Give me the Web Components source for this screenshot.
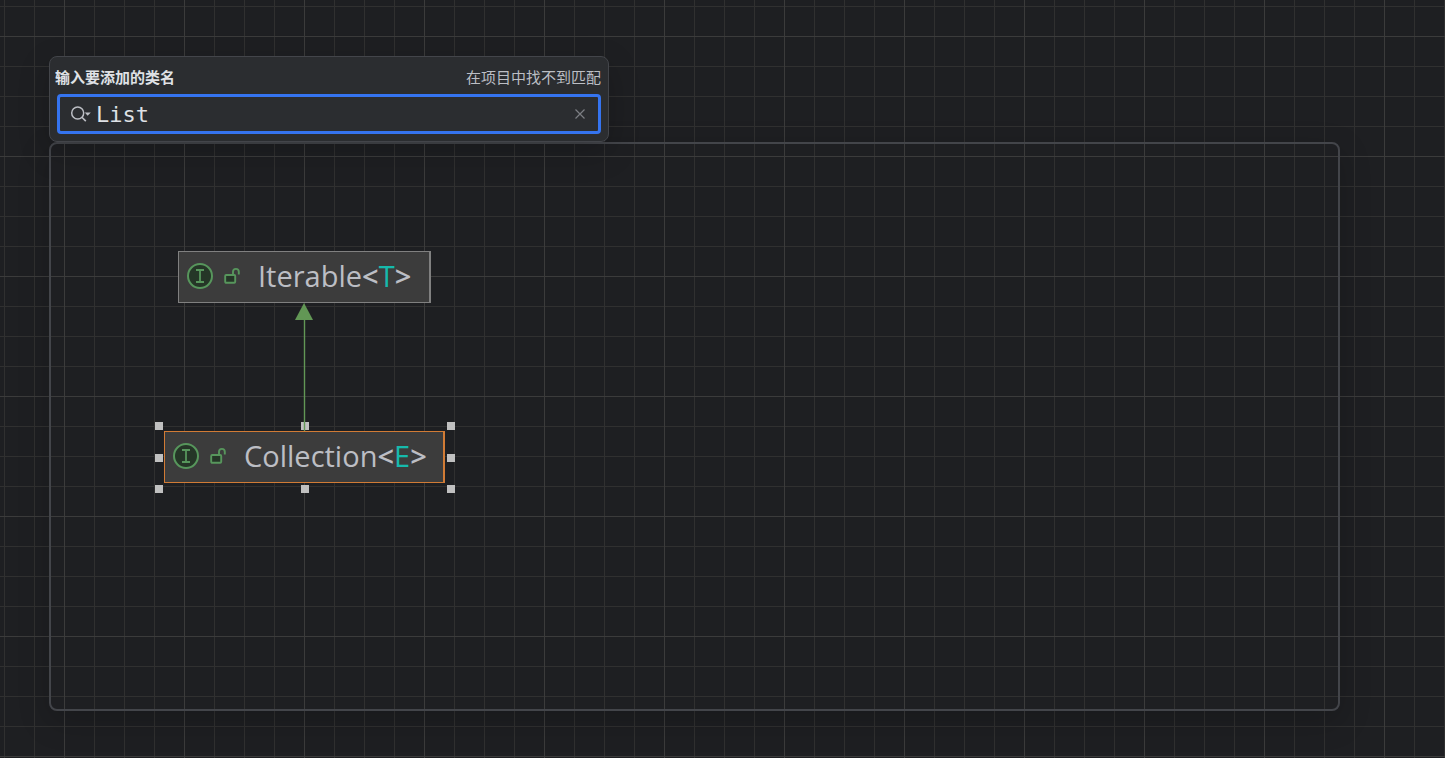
<!DOCTYPE html>
<html lang="zh-CN">
<head>
<meta charset="UTF-8">
<meta name="viewport" content="width=device-width, initial-scale=1.0">
<title>Diagram</title>
<style>
    :root {
        --color-canvas: #1e1f22;
        --color-grid: #303030;
        --color-grid-major: #3b3b3b;
        --color-panel: #2b2d30;
        --color-border: #43454a;
        --color-focus: #3574f0;
        --color-text: #dfe1e5;
        --color-label: #bcbec4;
        --color-node: #3c3c3c;
        --color-green: #57965c;
        --color-param: #16baac;
        --color-selected: #d17b35;
    }

    body {
        margin: 0;
        background-color: var(--color-canvas);
        color: var(--color-text);
        font-family: "Open Sans", "Noto Sans CJK SC", sans-serif;
    }
</style>
</head>
<body>
    <diagram-canvas>
        <class-search slot="search" value="List">
            <span slot="title">输入要添加的类名</span>
            <span slot="status">在项目中找不到匹配</span>
        </class-search>
        <class-node x="127" y="107" width="253">Iterable<b slot="param">T</b></class-node>
        <class-node x="113" y="287" width="281" selected>Collection<b slot="param">E</b></class-node>
        <extends-edge x="244" y="159" length="128"></extends-edge>
    </diagram-canvas>

<script>
class DiagramCanvas extends HTMLElement {

    constructor() {
        super();
        this.attachShadow({ mode: "open" });
    }

    connectedCallback() {
        this.shadowRoot.innerHTML = `
            <style>
                :host {
                    box-sizing: border-box;
                    display: flex;
                    flex-direction: column;
                    min-height: 100vh;
                    padding: 56px 105px 47px 49px;
                    overflow: hidden;
                    background-image:
                        linear-gradient(var(--color-grid-major) 1px, transparent 1px),
                        linear-gradient(90deg, var(--color-grid-major) 1px, transparent 1px),
                        linear-gradient(var(--color-grid) 1px, transparent 1px),
                        linear-gradient(90deg, var(--color-grid) 1px, transparent 1px);
                    background-size: 120px 120px, 120px 120px, 30px 30px, 30px 30px;
                    background-position: 0 36px, 64px 0, 0 6px, 4px 0;
                }

                .frame {
                    position: relative;
                    flex: 1;
                    border: 2px solid var(--color-border);
                    border-radius: 8px;
                    box-shadow: 0 10px 32px rgba(0, 0, 0, 0.2);
                }
            </style>

            <slot name="search"></slot>
            <main class="frame">
                <slot></slot>
            </main>
        `;
    }
}

class ClassSearch extends HTMLElement {

    constructor() {
        super();
        this.attachShadow({ mode: "open" });
    }

    connectedCallback() {
        this.render();
        this.eListeners();
    }

    render() {
        this.shadowRoot.innerHTML = `
            <style>
                :host {
                    position: relative;
                    z-index: 1;
                    box-sizing: border-box;
                    display: block;
                    width: 560px;
                    max-width: 100%;
                    padding: 8px 7px 7px;
                    background-color: var(--color-panel);
                    border: 1px solid var(--color-border);
                    border-radius: 8px;
                    box-shadow: 0 10px 32px rgba(0, 0, 0, 0.2);
                }

                .header {
                    display: flex;
                    justify-content: space-between;
                    height: 29px;
                    margin-left: -2px;
                    font-size: 15px;
                    line-height: 24px;
                }

                label {
                    font-weight: 700;
                }

                .status {
                    color: var(--color-label);
                }

                .field {
                    box-sizing: border-box;
                    display: flex;
                    align-items: center;
                    gap: 4px;
                    height: 40px;
                    padding: 0 10px;
                    border: 3px solid var(--color-focus);
                    border-radius: 4px;
                }

                input {
                    flex: 1;
                    min-width: 0;
                    padding: 0;
                    border: 0;
                    outline: 0;
                    background: none;
                    color: inherit;
                    font: 22px "DejaVu Sans Mono", monospace;
                }

                button {
                    display: flex;
                    padding: 0;
                    border: 0;
                    background: none;
                    color: var(--color-label);
                }

                .clear {
                    padding: 2px;
                    color: #7c7e83;
                }
            </style>

            <div class="header">
                <label for="class-name"><slot name="title"></slot></label>
                <span class="status"><slot name="status"></slot></span>
            </div>
            <div class="field">
                <button class="history" type="button" aria-label="Search history">
                    <svg width="22" height="20" viewBox="0 0 22 20" fill="none">
                        <circle cx="7.7" cy="9" r="6" stroke="currentColor" stroke-width="1.5"/>
                        <path d="M11.9 13.2L15.8 17.1" stroke="currentColor" stroke-width="1.6"/>
                        <path d="M14.7 8.6H20.8L17.7 11.8Z" fill="currentColor"/>
                    </svg>
                </button>
                <input id="class-name" type="text" autocomplete="off" spellcheck="false">
                <button class="clear" type="button" aria-label="Clear">
                    <svg width="12" height="12" viewBox="0 0 12 12" fill="none" stroke="currentColor" stroke-width="1.2">
                        <path d="M1.5 1.5L10.5 10.5M10.5 1.5L1.5 10.5"/>
                    </svg>
                </button>
            </div>
        `;
        this.shadowRoot.querySelector("input").value = this.getAttribute("value") || "";
    }

    eListeners() {
        const input = this.shadowRoot.querySelector("input");

        this.shadowRoot.querySelector(".clear").addEventListener("click", () => {
            input.value = "";
            input.focus();
        });
    }
}

class ClassNode extends HTMLElement {

    constructor() {
        super();
        this.attachShadow({ mode: "open" });
    }

    connectedCallback() {
        this.style.left = `${this.getAttribute("x")}px`;
        this.style.top = `${this.getAttribute("y")}px`;
        this.style.width = `${this.getAttribute("width")}px`;
        this.render();
    }

    render() {
        this.shadowRoot.innerHTML = `
            <style>
                :host {
                    position: absolute;
                    box-sizing: border-box;
                    display: flex;
                    align-items: center;
                    height: 52px;
                    padding: 0 0 2px 8px;
                    background-color: var(--color-node);
                    border: 1px solid #808080;
                    border-right-width: 2px;
                    color: var(--color-label);
                }

                :host([selected]) {
                    border-color: var(--color-selected);
                }

                svg {
                    flex: none;
                }

                .lock {
                    margin: 0 17px 0 11px;
                }

                .name {
                    font-size: 29px;
                    line-height: 40px;
                    white-space: nowrap;
                }

                .bracket {
                    font-weight: 600;
                }

                ::slotted(b) {
                    color: var(--color-param);
                    font-weight: 400;
                }

                .handles {
                    display: none;
                }

                :host([selected]) .handles {
                    position: absolute;
                    inset: -10px -12px -11px -10px;
                    display: grid;
                    grid-template-columns: repeat(3, 8px);
                    grid-template-rows: repeat(3, 8px);
                    justify-content: space-between;
                    align-content: space-between;
                }

                .handles i {
                    background-color: #c0c0c0;
                }

                .handles i:nth-child(5) {
                    visibility: hidden;
                }
            </style>

            <svg width="26" height="26" viewBox="0 0 26 26" fill="none" stroke="var(--color-green)">
                <circle cx="13" cy="13" r="12" fill="#253627" stroke-width="2"/>
                <path d="M9 7H17M13 7V19M9 19H17" stroke-width="1.8"/>
            </svg>
            <svg class="lock" width="17" height="18" viewBox="0 0 17 18" fill="none" stroke="var(--color-green)" stroke-width="1.9">
                <rect x="1.2" y="8" width="10" height="7.8" rx="1" fill="#253627"/>
                <path d="M9 8V4.8A2.9 2.9 0 0 1 14.8 4.8V7.6"/>
            </svg>
            <span class="name"><slot></slot><span class="bracket">&lt;</span><slot name="param"></slot><span class="bracket">&gt;</span></span>
            <div class="handles"><i></i><i></i><i></i><i></i><i></i><i></i><i></i><i></i><i></i></div>
        `;
    }
}

class ExtendsEdge extends HTMLElement {

    constructor() {
        super();
        this.attachShadow({ mode: "open" });
    }

    connectedCallback() {
        const length = this.getAttribute("length");

        this.style.left = `${this.getAttribute("x")}px`;
        this.style.top = `${this.getAttribute("y")}px`;
        this.shadowRoot.innerHTML = `
            <style>
                :host {
                    position: absolute;
                }

                svg {
                    display: block;
                }
            </style>

            <svg width="18" height="${length}" fill="#629755">
                <path d="M9 0L18 17H0Z"/>
                <rect x="8.8" y="17" width="1.4" height="${length - 17}"/>
            </svg>
        `;
    }
}

customElements.define("diagram-canvas", DiagramCanvas);
customElements.define("class-search", ClassSearch);
customElements.define("class-node", ClassNode);
customElements.define("extends-edge", ExtendsEdge);
</script>
</body>
</html>
